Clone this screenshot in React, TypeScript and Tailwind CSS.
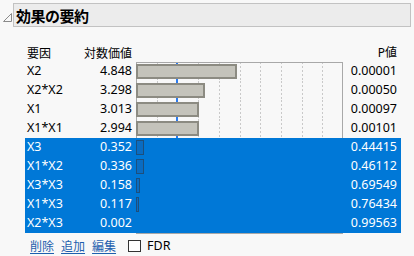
import React from 'react';

interface Effect {
  name: string;
  logworth: number;
  p: string;
  selected: boolean;
}

const effects: Effect[] = [
  { name: 'X2', logworth: 4.848, p: '0.00001', selected: false },
  { name: 'X2*X2', logworth: 3.298, p: '0.00050', selected: false },
  { name: 'X1', logworth: 3.013, p: '0.00097', selected: false },
  { name: 'X1*X1', logworth: 2.994, p: '0.00101', selected: false },
  { name: 'X3', logworth: 0.352, p: '0.44415', selected: true },
  { name: 'X1*X2', logworth: 0.336, p: '0.46112', selected: true },
  { name: 'X3*X3', logworth: 0.158, p: '0.69549', selected: true },
  { name: 'X1*X3', logworth: 0.117, p: '0.76434', selected: true },
  { name: 'X2*X3', logworth: 0.002, p: '0.99563', selected: true },
];

const UNIT = 20.7;
const gridX = [1, 3, 4, 5, 6, 7, 8, 9].map((i) => Math.round(i * UNIT) + 0.5);

function ChartCell({ effect, first }: { effect: Effect; first: boolean }) {
  const w = Math.round(effect.logworth * UNIT);
  return (
    <div className="relative w-[207px] h-full shrink-0">
      {!effect.selected && (
        <svg className="absolute inset-0" width="207" height="19">
          {gridX.map((x) => (
            <line key={x} x1={x} x2={x} y1="0" y2="19" stroke="#c9c9c9" strokeDasharray="2 2" />
          ))}
          <rect x="40" y="0" width="2" height="19" fill="#2b7cf0" />
          <line x1="0.5" x2="0.5" y1="0" y2="19" stroke="#a8a8a8" />
          <line x1="206.5" x2="206.5" y1="0" y2="19" stroke="#a8a8a8" />
          {first && <line x1="0" x2="207" y1="0.5" y2="0.5" stroke="#a8a8a8" />}
        </svg>
      )}
      {w >= 1 && (
        <div
          className={
            effect.selected
              ? 'absolute left-0 top-[2px] h-[15px] border border-[#1d4f7c] bg-[#0a6cc2]'
              : 'absolute left-0 top-[2px] h-[15px] border-2 border-[#8c8b82] bg-[#c4c3bb]'
          }
          style={{ width: w + 1 }}
        />
      )}
    </div>
  );
}

export default function App() {
  return (
    <div className="w-[414px] h-[256px] bg-[#f8f8f8] overflow-hidden font-['Noto_Sans','Noto_Sans_CJK_JP',sans-serif] text-black">
      <div className="flex items-start pt-[3px]">
        <div className="w-[13px] h-[24px] flex items-center">
          <svg width="13" height="24" className="block">
            <polygon points="3.5,18.5 11.5,18.5 11.5,10.5" fill="none" stroke="#8a8a8a" strokeWidth="1" />
          </svg>
        </div>
        <div className="w-[398px] h-[24px] border border-[#c2c2c2] bg-[#ececec] flex items-center pl-[2px]">
          <span className="font-['Noto_Sans_CJK_JP',sans-serif] font-bold text-[15px] leading-none tracking-[-0.5px]">
            効果の要約
          </span>
        </div>
      </div>

      <div className="ml-[25px] mt-[16px] w-[376px]">
        <div className="flex h-[19px] items-center text-[12px] font-['Noto_Sans_CJK_JP',sans-serif]">
          <div className="w-[55px] pl-[2px]">要因</div>
          <div className="w-[56px] pr-[4px] text-right">対数価値</div>
          <div className="w-[207px]" />
          <div className="w-[58px] pr-[4px] text-right">
            <span className="font-['Noto_Sans',sans-serif]">P</span>値
          </div>
        </div>

        {effects.map((e, i) => (
          <div
            key={e.name}
            className={
              e.selected
                ? 'flex h-[19px] items-center text-[12.5px] bg-[#0078d7] text-white'
                : 'flex h-[19px] items-center text-[12.5px]'
            }
          >
            <div className="w-[55px] pl-[2px] leading-none">{e.name}</div>
            <div className="w-[56px] pr-[4px] text-right leading-none">{e.logworth.toFixed(3)}</div>
            <ChartCell effect={e} first={i === 0} />
            <div className="w-[58px] pr-[4px] text-right leading-none">{e.p}</div>
          </div>
        ))}

        <div className="flex h-px">
          <div className="w-[111px]" />
          <div className="w-[207px] bg-[#a8a8a8]" />
        </div>
      </div>

      <div className="flex items-center h-[12px] mt-[6px] ml-[30px] text-[12px]">
        <a className="font-['Noto_Sans_CJK_JP',sans-serif] text-[#1e5fae] underline underline-offset-2 leading-none">削除</a>
        <a className="ml-[7px] font-['Noto_Sans_CJK_JP',sans-serif] text-[#1e5fae] underline underline-offset-2 leading-none">追加</a>
        <a className="ml-[7px] font-['Noto_Sans_CJK_JP',sans-serif] text-[#1e5fae] underline underline-offset-2 leading-none">編集</a>
        <div className="ml-[12px] w-[13px] h-[12px] border border-[#333] bg-white" />
        <span className="ml-[6px] text-[12.5px] leading-none">FDR</span>
      </div>
    </div>
  );
}
